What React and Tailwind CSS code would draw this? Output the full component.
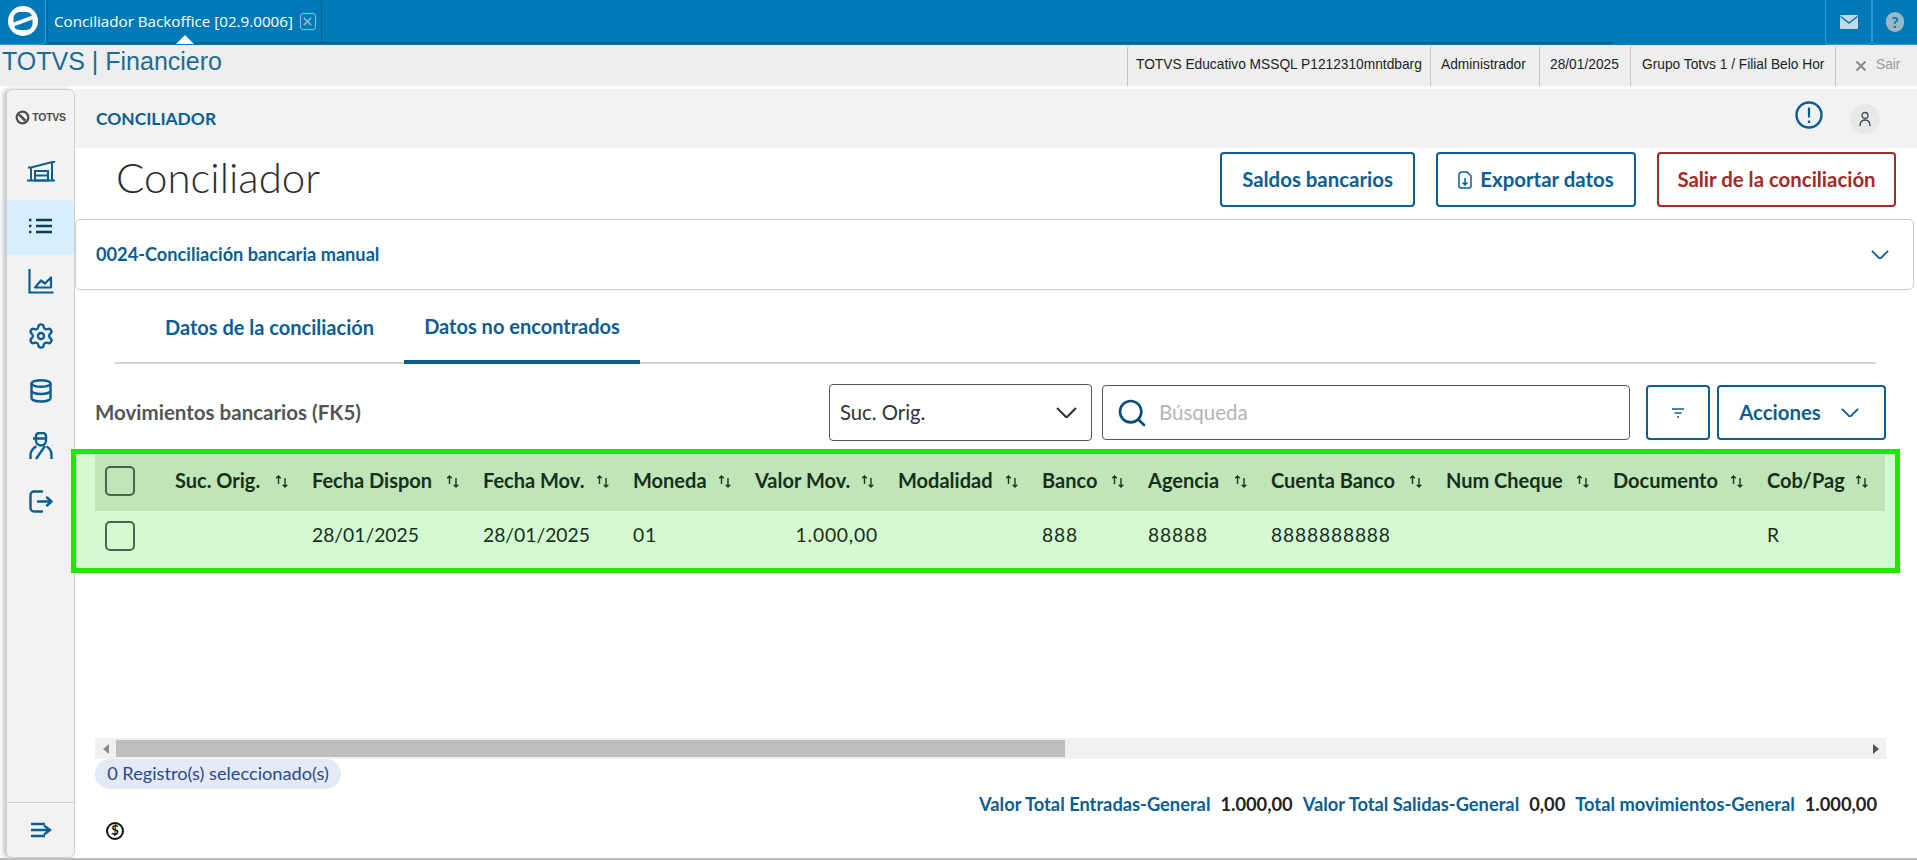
import React from "react";
import { Search, X } from "lucide-react";

const BLUE = "#0b5e91";

const columns = [
  { label: "Suc. Orig.", w: "w-[137px]" },
  { label: "Fecha Dispon", w: "w-[171px]", value: "28/01/2025" },
  { label: "Fecha Mov.", w: "w-[150px]", value: "28/01/2025" },
  { label: "Moneda", w: "w-[122px]", value: "01", num: true },
  { label: "Valor Mov.", w: "w-[143px]", value: "1.000,00", right: true, num: true },
  { label: "Modalidad", w: "w-[144px]" },
  { label: "Banco", w: "w-[106px]", value: "888", num: true },
  { label: "Agencia", w: "w-[123px]", value: "88888", num: true },
  { label: "Cuenta Banco", w: "w-[175px]", value: "8888888888", num: true },
  { label: "Num Cheque", w: "w-[167px]" },
  { label: "Documento", w: "w-[154px]" },
  { label: "Cob/Pag", w: "w-[125px]", value: "R" },
];

const headerCells = [
  { text: "TOTVS Educativo MSSQL P1212310mntdbarg", w: "w-[303px] pl-[8px]" },
  { text: "Administrador", w: "w-[109px] pl-[10px]" },
  { text: "28/01/2025", w: "w-[91px] pl-[10px]" },
  { text: "Grupo Totvs 1 / Filial Belo Hor", w: "w-[205px] pl-[11px]" },
];

function TotvsMark() {
  return (
    <svg width="30" height="30" viewBox="0 0 30 30" className="-mt-[3px]">
      <circle cx="15" cy="15" r="15" fill="#ffffff" />
      <rect x="5.500" y="6" width="19" height="18" rx="6" fill="#0079b8" />
      <path d="M3 19.500 L27 10.500" stroke="#ffffff" strokeWidth="4" />
    </svg>
  );
}

function SmallMark() {
  return (
    <svg width="15" height="15" viewBox="0 0 16 16" className="shrink-0">
      <circle cx="8" cy="8" r="6.200" fill="none" stroke="#4a4f52" strokeWidth="2.400" />
      <path d="M4.500 5 L11 11.500" stroke="#4a4f52" strokeWidth="2.800" />
    </svg>
  );
}

function SortIcon() {
  return (
    <svg width="16" height="15" viewBox="0 0 16 15" className="shrink-0" fill="none" stroke="#1b3a1e" strokeWidth="1.400">
      <path d="M4.500 10V2M2.200 4.300l2.300-2.300 2.300 2.300" />
      <path d="M11 4v9M8.700 10.700l2.300 2.300 2.300-2.300" />
    </svg>
  );
}

function Chevron({ width, color = BLUE }) {
  return (
    <svg width={width} height={width * 0.55} viewBox="0 0 20 11" fill="none" stroke={color} strokeWidth="2">
      <path d="M1 1l9 9 9-9" />
    </svg>
  );
}

function Checkbox() {
  return <div className="h-[30px] w-[30px] rounded-[5px] border-2 border-[#4a6650]" />;
}

function NavIcon({ children, active }) {
  return (
    <div className={`flex h-[55px] w-full items-center justify-center pb-[3px] ${active ? "rounded-r-[5px] bg-[#d7effc]" : ""}`}>
      {children}
    </div>
  );
}

function Sidebar() {
  return (
    <aside className="flex w-[69px] shrink-0 flex-col rounded-t-[6px] rounded-b-[6px] border border-[#cfcfcf] bg-[#f2f2f2] shadow-[-3px_0_4px_#c8c8c8]">
      <div className="flex h-[53px] items-center justify-center gap-[2px] pt-[2px]">
        <SmallMark />
        <span className="font-['Liberation_Sans',sans-serif] text-[10.500px] font-bold tracking-[-0.3px] text-[#4a4f52]">TOTVS</span>
      </div>
      <div className="flex flex-col pt-[2px]">
        <NavIcon>
          <svg width="30" height="22" viewBox="0 0 30 22" fill="none" stroke={BLUE} strokeWidth="2">
            <path d="M1 20.500h28M5 20.500V7.500L26 2v18.500M2 7.500h3M26 2h3" />
            <rect x="9" y="11" width="13" height="9.500" />
            <path d="M9 15.500h13" />
          </svg>
        </NavIcon>
        <NavIcon active>
          <svg width="24" height="16" viewBox="0 0 24 16" fill="none" stroke="#0a3d5c" strokeWidth="2.400">
            <path d="M7 2h16M7 8h16M7 14h16" />
            <path d="M0 2h2.400M0 8h2.400M0 14h2.400" />
          </svg>
        </NavIcon>
        <NavIcon>
          <svg width="26" height="25" viewBox="0 0 26 25" fill="none" stroke={BLUE} strokeWidth="2.200">
            <path d="M1.500 0v23.500h24" />
            <path d="M7 18.500l6-7 4 3 6-6v10z" strokeLinejoin="round" />
          </svg>
        </NavIcon>
        <NavIcon>
          <svg width="28" height="28" viewBox="0 0 24 24" fill="none" stroke={BLUE} strokeWidth="2" strokeLinejoin="round">
            <path d="M9.670 4.140a2.340 2.340 0 0 1 4.660 0 2.340 2.340 0 0 0 3.320 1.910 2.340 2.340 0 0 1 2.330 4.030 2.340 2.340 0 0 0 0 3.830 2.340 2.340 0 0 1-2.330 4.030 2.340 2.340 0 0 0-3.320 1.910 2.340 2.340 0 0 1-4.660 0 2.340 2.340 0 0 0-3.320-1.910 2.340 2.340 0 0 1-2.330-4.030 2.340 2.340 0 0 0 0-3.830 2.340 2.340 0 0 1 2.330-4.030 2.340 2.340 0 0 0 3.320-1.910" />
            <circle cx="12" cy="12" r="2.600" />
          </svg>
        </NavIcon>
        <NavIcon>
          <svg width="22" height="24" viewBox="0 0 22 24" fill="none" stroke={BLUE} strokeWidth="2.400">
            <ellipse cx="11" cy="4.500" rx="9.500" ry="3.300" />
            <path d="M1.500 4.500v14.500c0 2 4 3.500 9.500 3.500s9.500-1.500 9.500-3.500V4.500" />
            <path d="M1.500 11.500c0 2 4 3.500 9.500 3.500s9.500-1.500 9.500-3.500" />
          </svg>
        </NavIcon>
        <NavIcon>
          <svg width="24" height="28" viewBox="0 0 24 28" fill="none" stroke={BLUE} strokeWidth="2.400">
            <path d="M7 6.500V4a3 3 0 0 1 3-3h4a3 3 0 0 1 3 3v4.500a5 5 0 0 1-10 0zM4 6.500h13" />
            <path d="M1.500 27v-4c0-4 3-7.500 6-8.500M22.500 27v-4c0-4-2-7-5-8.500M7 27l9-13" />
          </svg>
        </NavIcon>
        <NavIcon>
          <svg width="24" height="23" viewBox="0 0 24 23" fill="none" stroke={BLUE} strokeWidth="2.400" strokeLinecap="round" strokeLinejoin="round">
            <path d="M13 1.500H5a3.500 3.500 0 0 0-3.500 3.500v13A3.500 3.500 0 0 0 5 21.500h8" />
            <path d="M9 11.500h13M18 7.500l4.500 4-4.500 4" />
          </svg>
        </NavIcon>
      </div>
      <div className="mt-auto flex h-[55px] items-center justify-center border-t border-[#cfcfcf]">
        <svg width="22" height="16" viewBox="0 0 22 16" fill="none" stroke={BLUE} strokeWidth="2.400">
          <path d="M1 2h14M1 8h19M1 14h14M14 3.500l6 4.500-6 4.500" />
        </svg>
      </div>
    </aside>
  );
}

function OutlineButton({ children, red, className = "" }) {
  return (
    <button
      className={`flex h-[55px] items-center justify-center rounded-[4px] border-2 bg-white text-[20.400px] font-bold ${
        red ? "border-[#a32a26] text-[#a32a26]" : "border-[#0b5e91] text-[#0b5e91]"
      } ${className}`}
    >
      {children}
    </button>
  );
}

export default function App() {
  return (
    <div className="flex h-[860px] w-[1917px] flex-col overflow-hidden bg-white font-['Lato',sans-serif]">
      {/* barra superior do smartclient */}
      <div className="flex h-[45px] shrink-0 items-stretch bg-[#0079b8]">
        <div className="flex w-[46px] items-center justify-center rounded-br-[6px] border-r border-b border-[#2f9bd6]">
          <TotvsMark />
        </div>
        <div className="relative mb-[1px] ml-[1px] flex w-[275px] items-center rounded-tr-[4px] border-x border-b-2 border-[#005f8f] pl-[6px] font-['Open_Sans',sans-serif] text-[15.200px] whitespace-nowrap text-white">
          Conciliador Backoffice [02.9.0006]
          <span className="ml-[7px] flex h-[17px] w-[16px] items-center justify-center rounded-[3px] border border-[#9fb9c8]">
            <X size={13} strokeWidth={3} className="text-[#9fb9c8]" />
          </span>
          <div className="absolute bottom-[-2px] left-[128px] h-0 w-0 border-x-[9px] border-b-[9px] border-x-transparent border-b-white" />
        </div>
        <div className="mb-[1px] w-[1290px] border-b-2 border-[#005f8f]" />
        <div className="ml-auto flex">
          <div className="flex w-[47px] items-center justify-center rounded-b-[4px] border-x border-b border-[#2f9bd6]">
            <svg width="18" height="14" viewBox="0 0 18 14">
              <rect width="18" height="14" rx="1" fill="#c3d9e6" />
              <path d="M0.500 1.500L9 8l8.500-6.500" fill="none" stroke="#0079b8" strokeWidth="1.500" />
            </svg>
          </div>
          <div className="flex w-[45px] items-center justify-center rounded-bl-[4px] border-b border-l border-[#2f9bd6]">
            <span className="flex h-[20px] w-[18px] items-center justify-center rounded-full bg-[#9ab7c7] text-[16px] font-bold text-[#0079b8]">?</span>
          </div>
        </div>
      </div>

      {/* cabecalho com dados do ambiente */}
      <div className="flex h-[41px] shrink-0 items-stretch justify-between bg-[#eeeeee] font-['Liberation_Sans',sans-serif]">
        <div className="pl-[2px] text-[25px] leading-[33px] text-[#1c6c98]">TOTVS | Financiero</div>
        <div className="flex">
          {headerCells.map((c) => (
            <div key={c.text} className={`flex ${c.w} items-center rounded-tl-[4px] border-l border-[#c4c4c4] text-[13.750px] whitespace-nowrap text-[#222222]`}>
              {c.text}
            </div>
          ))}
          <div className="flex w-[82px] items-center rounded-tl-[4px] border-l border-[#c4c4c4] pl-[17px] text-[13.750px] text-[#9a9a9a]">
            <X size={16} strokeWidth={3} className="mr-[7px] text-[#8a8a8a]" />
            Sair
          </div>
        </div>
      </div>

      <div className="flex min-h-0 flex-1 border-b-2 border-[#bdbdbd] pt-[3px] pl-[6px]">
        <Sidebar />
        <main className="flex min-w-0 flex-1 flex-col">
          <div className="flex h-[59px] shrink-0 items-center justify-between bg-[#f2f2f2] pr-[37px] pl-[21px]">
            <span className="pt-[1px] text-[17.400px] font-bold text-[#0b5e91]">CONCILIADOR</span>
            <div className="flex items-center gap-[27px]">
              <svg width="28" height="28" viewBox="0 0 28 28" fill="none" className="-mt-[8px]">
                <circle cx="14" cy="14" r="12.500" stroke="#0b5e91" strokeWidth="2.400" />
                <path d="M14 6.500v10M14 19.500v2.500" stroke="#0b5e91" strokeWidth="2.200" />
              </svg>
              <div className="flex h-[30px] w-[30px] items-center justify-center rounded-full bg-[#e8e8e8]">
                <svg width="14" height="16" viewBox="0 0 14 16" fill="none" stroke="#3a4a52" strokeWidth="1.300">
                  <circle cx="7" cy="4.500" r="3" />
                  <path d="M2 15c0-4 2-6 5-6s5 2 5 6" />
                </svg>
              </div>
            </div>
          </div>

          <div className="flex h-[71px] shrink-0 items-start justify-between pt-[4px] pr-[21px] pl-[41px]">
            <h1 className="text-[42px] leading-[50px] font-light text-[#2c2c2c]">Conciliador</h1>
            <div className="flex gap-[21px]">
              <OutlineButton className="w-[195px]">Saldos bancarios</OutlineButton>
              <OutlineButton className="w-[200px] gap-[8px]">
                <svg width="14" height="18" viewBox="0 0 14 18" fill="none" stroke="#0b5e91" strokeWidth="1.500">
                  <path d="M4 1h5l4 4v10a2 2 0 0 1-2 2H3a2 2 0 0 1-2-2V4a3 3 0 0 1 3-3zM7 7v7M4.500 11.500L7 14l2.500-2.500" />
                </svg>
                Exportar datos
              </OutlineButton>
              <OutlineButton red className="w-[239px]">Salir de la conciliación</OutlineButton>
            </div>
          </div>

          <div className="mr-[3px] flex h-[71px] shrink-0 items-center justify-between rounded-[5px] border border-[#cccccc] pr-[24px] pl-[20px]">
            <span className="pt-[1px] text-[18.200px] font-bold text-[#0b5e91]">0024-Conciliación bancaria manual</span>
            <Chevron width={18} />
          </div>

          <div className="mr-[41px] ml-[40px] flex h-[74px] shrink-0 items-stretch border-b-2 border-[#d4d4d4] pl-[11px]">
            <div className="flex w-[278px] items-center pt-[2px] pl-[39px] text-[20px] font-bold whitespace-nowrap text-[#0b5e91]">Datos de la conciliación</div>
            <div className="-mb-[2px] flex w-[236px] items-center justify-center border-b-[4px] border-[#0b5e91] pt-[2px] text-[20px] font-bold whitespace-nowrap text-[#0b5e91]">
              Datos no encontrados
            </div>
          </div>

          <div className="mt-[20px] mr-[31px] flex h-[57px] shrink-0 items-center pl-[20px]">
            <span className="pb-[1px] text-[20.500px] font-bold text-[#555555]">Movimientos bancarios (FK5)</span>
            <div className="ml-auto flex h-[57px] w-[263px] items-center justify-between rounded-[4px] border border-[#555555] pr-[14px] pl-[10px] text-[20.300px] text-[#333333]">
              Suc. Orig.
              <Chevron width={21} color="#333333" />
            </div>
            <div className="ml-[10px] flex h-[55px] w-[528px] items-center rounded-[4px] border border-[#555555] pl-[13px] text-[20.500px] text-[#b5b5b5]">
              <Search size={32} strokeWidth={2} className="mr-[11px] text-[#0b4f78]" />
              Búsqueda
            </div>
            <button className="ml-[16px] flex h-[55px] w-[64px] items-center justify-center rounded-[4px] border-2 border-[#0b5e91]">
              <svg width="14" height="10" viewBox="0 0 14 10" fill="none" stroke="#0b5e91" strokeWidth="1.600">
                <path d="M1 1h12M3.500 5h7M6 9h2" />
              </svg>
            </button>
            <button className="ml-[7px] flex h-[55px] w-[169px] items-center justify-center gap-[20px] rounded-[4px] border-2 border-[#0b5e91] pr-[5px] text-[20.400px] font-bold text-[#0b5e91]">
              Acciones
              <Chevron width={18} />
            </button>
          </div>

          {/* tabela destacada com o contorno verde */}
          <div className="relative z-10 mt-[8px] -ml-[4px] h-[124px] w-[1829px] shrink-0 border-[5px] border-[#22e600] bg-[#d5f9d0] text-[19.300px] text-[#16301a]">
            <div className="ml-[19px] flex h-[57px] w-[1790px] items-center bg-[#c0e5b9] pb-[3px]">
              <div className="flex w-[80px] shrink-0 pl-[10px]">
                <Checkbox />
              </div>
              {columns.map((c) => (
                <div key={c.label} className={`flex ${c.w} shrink-0 items-center justify-between pr-[22px] text-[20px] font-bold whitespace-nowrap`}>
                  <span className="-mt-[2px]">{c.label}</span>
                  <SortIcon />
                </div>
              ))}
            </div>
            <div className="ml-[19px] flex h-[57px] w-[1790px] items-center pb-[7px]">
              <div className="flex w-[80px] shrink-0 pl-[10px]">
                <Checkbox />
              </div>
              {columns.map((c) => (
                <div key={c.label} className={`-mt-[2px] ${c.w} shrink-0 whitespace-nowrap ${c.right ? "pr-[20px] text-right" : ""} ${c.num ? "tracking-[0.8px]" : ""}`}>
                  {c.value}
                </div>
              ))}
            </div>
          </div>

          <div className="mt-[165px] ml-[20px] flex h-[21px] w-[1791px] shrink-0 items-center bg-[#f0f0f0]">
            <div className="flex w-[21px] justify-center">
              <div className="h-0 w-0 border-y-[5px] border-r-[6px] border-y-transparent border-r-[#8a8a8a]" />
            </div>
            <div className="h-[17px] w-[949px] bg-[#bebebe]" />
            <div className="ml-auto flex w-[21px] justify-center">
              <div className="h-0 w-0 border-y-[5px] border-l-[6px] border-y-transparent border-l-[#555555]" />
            </div>
          </div>

          <div className="ml-[20px] flex h-[30px] w-[246px] shrink-0 items-center justify-center rounded-full bg-[#e3e9f7] text-[18.200px] text-[#2b4a8b]">
            0 Registro(s) seleccionado(s)
          </div>

          <div className="mt-[3px] mr-[40px] flex shrink-0 justify-end gap-[10px] text-[18.300px] leading-[24px] font-bold whitespace-nowrap">
            <span className="text-[#0b5e91]">Valor Total Entradas-General</span>
            <span className="text-[#222222]">1.000,00</span>
            <span className="text-[#0b5e91]">Valor Total Salidas-General</span>
            <span className="text-[#222222]">0,00</span>
            <span className="text-[#0b5e91]">Total movimientos-General</span>
            <span className="text-[#222222]">1.000,00</span>
          </div>

          <div className="mt-[6px] ml-[31px] flex h-[18px] w-[18px] shrink-0 items-center justify-center rounded-full border-2 border-[#111111] text-[13px] font-bold text-[#111111]">
            $
          </div>
        </main>
      </div>
    </div>
  );
}
